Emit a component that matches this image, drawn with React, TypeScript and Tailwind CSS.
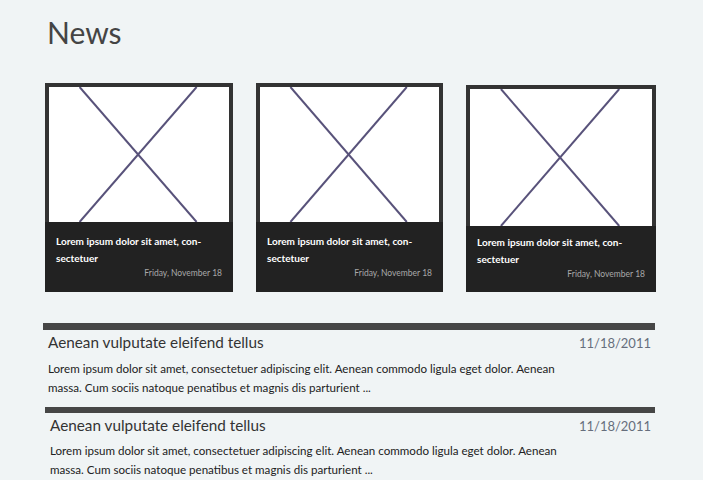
import { type FC } from "react";

type Card = {
  wrap: string;
  img: string;
  cap: string;
};

const cards: Card[] = [
  { wrap: "w-[188px]", img: "h-[139px]", cap: "h-[70px] pt-[11px]" },
  { wrap: "w-[187px]", img: "h-[139px]", cap: "h-[70px] pt-[11px]" },
  { wrap: "w-[190px]", img: "h-[141px]", cap: "h-[66px] pt-[8px]" },
];

const items = [
  { shift: "ml-0", bar: "h-[7px]" },
  { shift: "ml-[2px]", bar: "h-[6px]" },
];

const Placeholder: FC = () => (
  <svg className="block h-full w-full" preserveAspectRatio="none">
    <line x1="17%" y1="0" x2="82%" y2="100%" stroke="#58527a" strokeWidth="2" />
    <line x1="82%" y1="0" x2="17%" y2="100%" stroke="#58527a" strokeWidth="2" />
  </svg>
);

const NewsCard: FC<{ card: Card }> = ({ card }) => (
  <div className={`flex flex-col ${card.wrap}`}>
    <div className={`border-4 border-b-0 border-[#333333] bg-white ${card.img}`}>
      <Placeholder />
    </div>
    <div className={`bg-[#222222] px-[11px] ${card.cap}`}>
      <p className="text-[10px] font-bold leading-[17px] text-white">
        Lorem ipsum dolor sit amet, con-
        <br />
        sectetuer
      </p>
      <p className="text-right text-[8.5px] leading-[12px] text-[#a8a8a8]">
        Friday, November 18
      </p>
    </div>
  </div>
);

export default function App() {
  return (
    <div className="min-h-screen bg-[#f0f4f5] pl-[45px] pr-[46px] pt-[12px] font-['Lato',sans-serif]">
      <h1 className="ml-[2px] text-[30px] leading-[40px] text-[#444444]">News</h1>

      <div className="mt-[31px] flex items-end gap-[23px]">
        {cards.map((c, i) => (
          <NewsCard key={i} card={c} />
        ))}
      </div>

      <div className="-ml-[2px] mt-[31px] flex w-[612px] flex-col gap-[10px]">
        {items.map((it, i) => (
          <div key={i} className={it.shift}>
            <div className={`bg-[#464646] ${it.bar}`} />
            <div className="mt-[1px] flex items-baseline justify-between pl-[5px] pr-[4px]">
              <h2 className="text-[15.3px] leading-[22px] text-[#333333]">
                Aenean vulputate eleifend tellus
              </h2>
              <span className="text-[13px] text-[#666e7c]">11/18/2011</span>
            </div>
            <p className="mt-[5px] w-[525px] pl-[5px] text-[11.6px] leading-[19px] text-[#222222]">
              Lorem ipsum dolor sit amet, consectetuer adipiscing elit. Aenean commodo ligula
              eget dolor. Aenean massa. Cum sociis natoque penatibus et magnis dis parturient ...
            </p>
          </div>
        ))}
      </div>
    </div>
  );
}
